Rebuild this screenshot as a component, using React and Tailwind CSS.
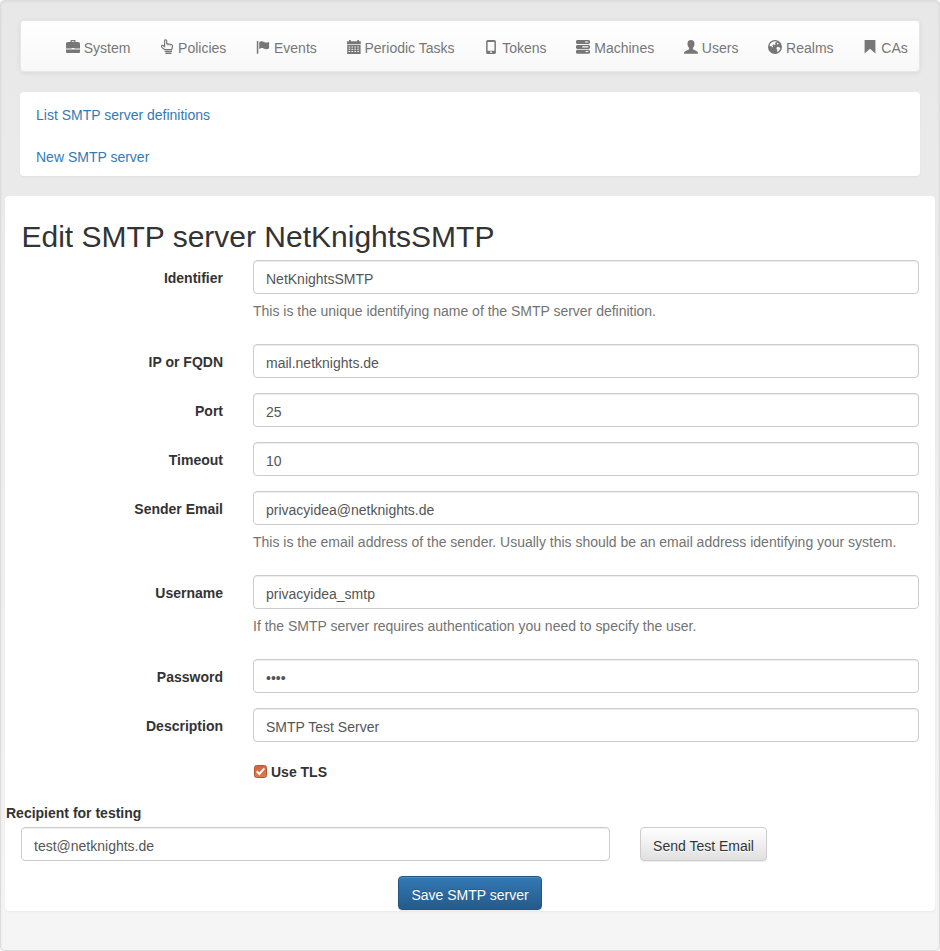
import React from "react";

const glyphs = {
  system: (
    <>
      <path d="M4.4 2V1.2Q4.4 0 5.6 0H8.4Q9.6 0 9.6 1.2V2H12.2Q14 2 14 4V8.4H8.3V7.9H5.7V8.4H0V4Q0 2 1.8 2ZM5.8 2H8.2V1.2H5.8Z" />
      <path d="M0 9.6H14V12Q14 13 13 13H1Q0 13 0 12Z" />
    </>
  ),
  policies: (
    <g transform="translate(.7 .4)">
      <path
        d="M4.1 9.3 1.5 7.2C.7 6.4.6 5.5 1.1 5.1c.5-.4 1.2-.2 1.8.3l1 .8V.4C3.9-1 6-1 6 .4v2.9l4.4.8c1.2.2 1.6 1 1.4 2l-.8 3.2Z"
        fill="none"
        stroke="currentColor"
        strokeWidth="1.2"
      />
      <path d="M7.2 3.6v1.7M9.3 4v1.5" stroke="currentColor" strokeWidth=".7" />
      <path d="M4 10.4h7.4v1.3H4ZM4.7 12.2h6v1.3h-6Z" />
    </g>
  ),
  events: (
    <>
      <path d="M.8 1h1.5v12.7H.8Z" />
      <path d="M3.2 2.1C5.6.6 7.1 1.5 8.5 2.2c1.7.8 3 .3 4.6-.5V8.3c-2.3 1.4-4.1.8-5.5.1-1.7-.8-3-.3-4.4.6Z" />
    </>
  ),
  periodic: (
    <>
      <path d="M0 1.2h2V0h1.8v1.2h6.4V0H12v1.2h1.8v3H0Z" />
      <path
        fillRule="evenodd"
        d="M.2 5h13.4v8.9H.2ZM1.6 6.4v1h1.6v-1Zm2.9 0v1h1.6v-1Zm2.9 0v1H9v-1Zm2.9 0v1h1.6v-1ZM1.6 8.7v1h1.6v-1Zm2.9 0v1h1.6v-1Zm2.9 0v1H9v-1Zm2.9 0v1h1.6v-1ZM1.6 11v1h1.6v-1Zm2.9 0v1h1.6v-1Zm2.9 0v1H9v-1Zm2.9 0v1h1.6v-1Z"
      />
    </>
  ),
  tokens: (
    <path
      fillRule="evenodd"
      d="M3.8 0h6.4q1.7 0 1.7 1.6v10.8q0 1.6-1.7 1.6H3.8q-1.7 0-1.7-1.6V1.6Q2.1 0 3.8 0ZM3.6 2v8.7h6.8V2ZM6 11.6v1.2h2v-1.2Z"
    />
  ),
  machines: (
    <>
      <path fillRule="evenodd" d="M1 0h12l1 1v2.1l-1 1H1l-1-1V1ZM9 1.5v1.1h3.3V1.5Z" />
      <path fillRule="evenodd" d="M1 4.9h12l1 1V8l-1 1H1L0 8V5.900ZM6.2 6.3v1.1h6.1V6.300Z" />
      <path fillRule="evenodd" d="M1 9.700h12l1 1v2l-1 1H1l-1-1v-2ZM9.6 11v1.1h2.7V11Z" />
    </>
  ),
  users: (
    <path d="M7 0C9.400 0 10.600 1.500 10.500 3.700c0 1.800-.6 3.200-1.600 4.200v1.300c.8.8 3.300 1.400 4.300 2.200.6.500.9 1.200.9 2.300H0c0-1.100.2-1.800.8-2.300 1-.8 3.500-1.400 4.300-2.200V7.900C4.100 6.900 3.500 5.500 3.500 3.700 3.400 1.500 4.600 0 7 0Z" />
  ),
  realms: (
    <path
      fillRule="evenodd"
      d="M7 0a7 7 0 1 1 0 14A7 7 0 0 1 7 0ZM4.300 1.900 2.400 3.600 1.500 5.800 3.400 6.300 4.600 7.500 5 6.200 4.200 5.200 5.600 4.500 6.600 5.200 7.700 4 6.700 3.100 8.300 2.300 8.900 1.400 6.500 1.200ZM9.600 2.400 8.800 3.900 9.800 4.700 10.700 3.300ZM9.400 6.800 8.300 8.300 9.200 9.600 9 12.100 11 11 12.400 8.800 11.900 7.400Z"
    />
  ),
  cas: <path d="M1.600 0h10.800v13.600L7 8.700 1.600 13.600Z" />,
};

const navItems = [
  ["system", "System"],
  ["policies", "Policies"],
  ["events", "Events"],
  ["periodic", "Periodic Tasks"],
  ["tokens", "Tokens"],
  ["machines", "Machines"],
  ["users", "Users"],
  ["realms", "Realms"],
  ["cas", "CAs"],
];

const fields = [
  { label: "Identifier", value: "NetKnightsSMTP", help: "This is the unique identifying name of the SMTP server definition." },
  { label: "IP or FQDN", value: "mail.netknights.de" },
  { label: "Port", value: "25" },
  { label: "Timeout", value: "10" },
  {
    label: "Sender Email",
    value: "privacyidea@netknights.de",
    help: "This is the email address of the sender. Usually this should be an email address identifying your system.",
  },
  { label: "Username", value: "privacyidea_smtp", help: "If the SMTP server requires authentication you need to specify the user." },
  { label: "Password", value: "pass", type: "password" },
  { label: "Description", value: "SMTP Test Server" },
];

function Glyph({ name }) {
  return (
    <svg viewBox="0 0 14 14" className="-mt-[2px] h-3.5 w-3.5 shrink-0 overflow-visible" fill="currentColor" aria-hidden="true">
      {glyphs[name]}
    </svg>
  );
}

function TextInput(props) {
  return (
    <input
      {...props}
      className="block h-[34px] w-full rounded border border-[#ccc] bg-white px-3 pt-[8px] pb-1 text-sm leading-5 text-[#555] shadow-[inset_0_1px_1px_rgba(0,0,0,0.075)] outline-none"
    />
  );
}

function Field({ label, value, help, type = "text" }) {
  return (
    <div className="mb-[15px] flex">
      <label className="w-[218px] shrink-0 pt-2 text-right font-bold">{label}</label>
      <div className="ml-[30px] w-[666px]">
        <TextInput type={type} defaultValue={value} aria-label={label} />
        {help && <p className="mt-[7px] mb-2 whitespace-nowrap text-[#737373] tracking-[-0.01px]">{help}</p>}
      </div>
    </div>
  );
}

export default function App() {
  return (
    <div className="h-[951px] w-[940px] overflow-hidden rounded border border-[#dcdcdc] bg-linear-to-b from-[#e8e8e8] to-[#f5f5f5] pt-[19px] font-['Liberation_Sans',Arial,sans-serif] text-sm leading-5 text-[#333] shadow-[inset_0_1px_3px_rgba(0,0,0,0.05),0_1px_0_rgba(255,255,255,0.1)]">
      <nav className="mx-[19px] flex h-[52px] items-center gap-[29.8px] rounded border border-[#e7e7e7] bg-linear-to-b from-white to-[#f8f8f8] pt-1 pl-[44.8px] whitespace-nowrap text-[#777] shadow-[inset_0_1px_0_rgba(255,255,255,0.15),0_1px_5px_rgba(0,0,0,0.075)]">
        {navItems.map(([name, label]) => (
          <a key={name} className="flex items-center gap-[3.9px]">
            <Glyph name={name} />
            <span>{label}</span>
          </a>
        ))}
      </nav>

      <aside className="mx-[19px] mt-5 flex h-[84px] flex-col gap-[22px] rounded bg-white pt-[13px] pl-4 text-[#337ab7] shadow-[0_1px_2px_rgba(0,0,0,0.05)]">
        <a>List SMTP server definitions</a>
        <a>New SMTP server</a>
      </aside>

      <main className="mx-1 mt-5 h-[715px] rounded bg-white pt-6 shadow-[0_1px_2px_rgba(0,0,0,0.05)]">
        <h2 className="mb-[7px] pl-[16.5px] text-[30px] leading-[33px]">Edit SMTP server NetKnightsSMTP</h2>
        <form>
          {fields.map((field) => (
            <Field key={field.label} {...field} />
          ))}
          <div className="mt-[19px] ml-[249px] flex items-center gap-[4px] font-bold">
            <span className="mb-px flex h-[13px] w-[13px] items-center justify-center rounded-[2.5px] border border-[#b9532f] bg-linear-to-b from-[#d2663e] to-[#db7851]">
              <svg viewBox="0 0 11 11" className="h-[11px] w-[11px]" fill="none" stroke="white" strokeWidth="2">
                <path d="M1.7 5.2 4.4 8 9.3 2.4" />
              </svg>
            </span>
            <label className="pt-px">Use TLS</label>
          </div>
          <div className="mt-[21px] pl-px font-bold">Recipient for testing</div>
          <div className="mt-[4px] ml-4 flex gap-[30px]">
            <div className="w-[589px]">
              <TextInput defaultValue="test@netknights.de" aria-label="Recipient for testing" />
            </div>
            <button
              type="button"
              className="h-[34px] w-[127px] rounded border border-[#ccc] bg-linear-to-b from-white to-[#e0e0e0] pt-[3px] whitespace-nowrap shadow-[inset_0_1px_0_rgba(255,255,255,0.15),0_1px_1px_rgba(0,0,0,0.075)] [text-shadow:0_1px_0_#fff]"
            >
              Send Test Email
            </button>
          </div>
          <button
            type="button"
            className="mt-[15px] ml-[393px] block h-[34px] w-[144px] rounded border border-[#245580] bg-linear-to-b from-[#337ab7] to-[#265a88] pt-[3px] whitespace-nowrap text-white shadow-[inset_0_1px_0_rgba(255,255,255,0.15),0_1px_1px_rgba(0,0,0,0.075)] [text-shadow:0_-1px_0_rgba(0,0,0,0.2)]"
          >
            Save SMTP server
          </button>
        </form>
      </main>
    </div>
  );
}
